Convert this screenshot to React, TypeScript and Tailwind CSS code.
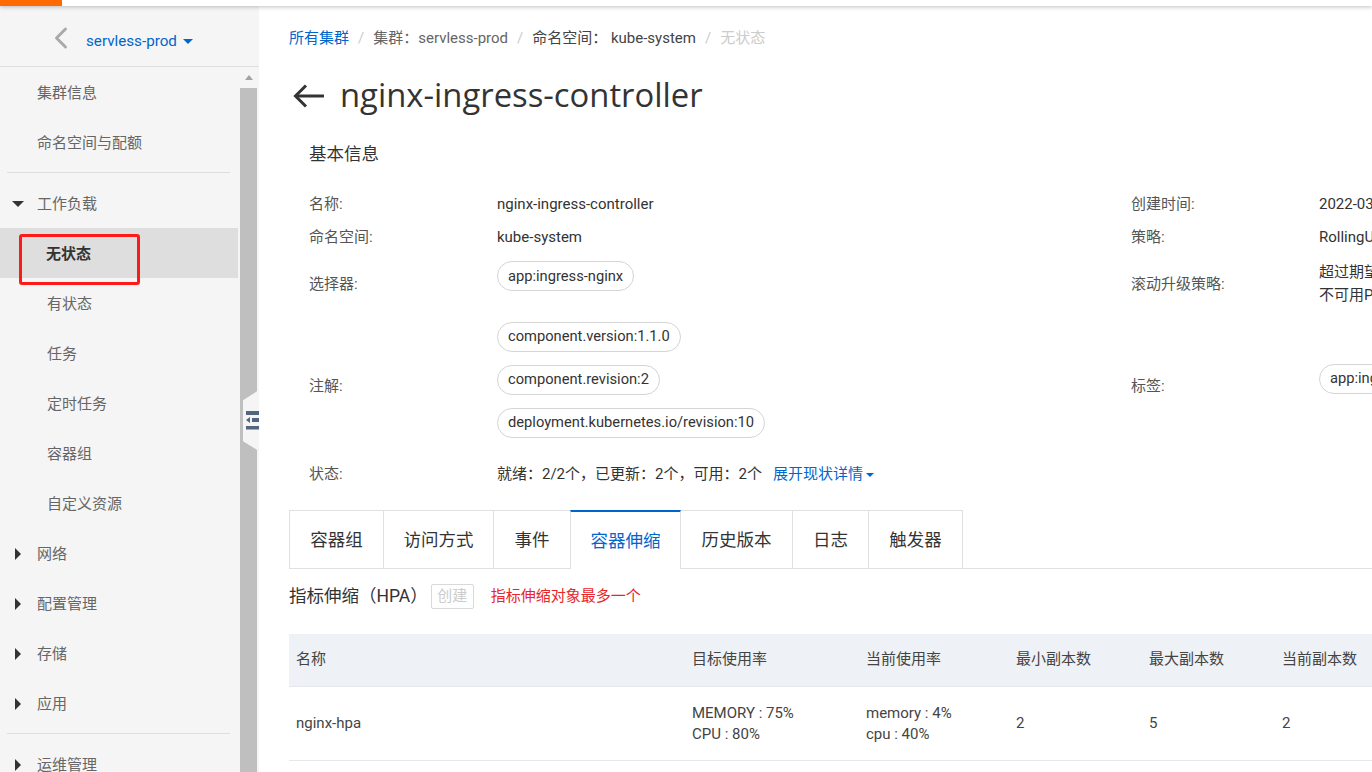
import { ChevronLeft } from 'lucide-react'

const FONT = "font-['Roboto','Noto_Sans_CJK_SC',sans-serif]"

function Caret({ dir }: { dir: 'down' | 'right' }) {
  if (dir === 'down') {
    return <span className="w-0 h-0 border-x-[6px] border-x-transparent border-t-[6px] border-t-[#333]" />
  }
  return <span className="w-0 h-0 border-y-[6px] border-y-transparent border-l-[6px] border-l-[#333]" />
}

function NavItem({ label }: { label: string }) {
  return <div className="h-[50px] flex items-center pl-[37px] pt-[2px] text-[15px] text-[#666]">{label}</div>
}

function NavGroup({ label, open }: { label: string; open?: boolean }) {
  return (
    <div className="h-[50px] flex items-center pt-[2px] text-[15px] text-[#666]">
      <span className={open ? 'w-[37px] pl-3 flex' : 'w-[37px] pl-[15px] flex'}>
        <Caret dir={open ? 'down' : 'right'} />
      </span>
      {label}
    </div>
  )
}

function SubItem({ label, active }: { label: string; active?: boolean }) {
  return (
    <div className={`h-[50px] flex items-center pt-[2px] text-[15px] ${active ? 'pl-[46px] bg-[#dedede] font-bold text-[#333]' : 'pl-[47px] text-[#666]'}`}>
      {label}
    </div>
  )
}

function Sidebar() {
  return (
    <aside className="w-[259px] shrink-0 bg-[#f5f5f5] flex flex-col h-full">
      <div className="h-[61px] shrink-0 flex items-center border-b border-[#dedede] pl-[43px]">
        <ChevronLeft size={36} strokeWidth={2} className="text-[#aaa] mt-[3px]" />
        <span className="ml-[7px] mt-[11px] text-[15.2px] text-[#0066cc]">servless-prod</span>
        <span className="ml-[6px] mt-[11px] w-0 h-0 border-x-[5px] border-x-transparent border-t-[5px] border-t-[#0066cc]" />
      </div>
      <div className="flex flex-1 min-h-0 overflow-hidden">
        <nav className="w-[238px] shrink-0">
          <NavItem label="集群信息" />
          <NavItem label="命名空间与配额" />
          <div className="h-px bg-[#dedede] ml-[7px] mr-[8px] mt-[5px] mb-[5px]" />
          <NavGroup label="工作负载" open />
          <SubItem label="无状态" active />
          <SubItem label="有状态" />
          <SubItem label="任务" />
          <SubItem label="定时任务" />
          <SubItem label="容器组" />
          <SubItem label="自定义资源" />
          <NavGroup label="网络" />
          <NavGroup label="配置管理" />
          <NavGroup label="存储" />
          <NavGroup label="应用" />
          <div className="h-px bg-[#dedede] ml-[7px] mr-[8px] mt-[5px] mb-[5px]" />
          <NavGroup label="运维管理" />
        </nav>
        <div className="w-[17px] ml-[2px] flex flex-col">
          <div className="h-[21px] flex items-center justify-center bg-[#f5f5f5]">
            <span className="w-0 h-0 border-x-[4px] border-x-transparent border-b-[5px] border-b-[#a3a3a3]" />
          </div>
          <div className="flex-1 bg-[#bfbfbf]" />
        </div>
      </div>
    </aside>
  )
}

function Tag({ children }: { children: string }) {
  return (
    <span className="inline-flex items-center h-[30px] px-[10px] rounded-[15px] border border-[#d4d4d4] text-[14.7px] text-[#333] whitespace-nowrap">
      {children}
    </span>
  )
}

function InfoRow({ label, value, label2, value2, className }: {
  label: string
  value: React.ReactNode
  label2?: string
  value2?: React.ReactNode
  className: string
}) {
  return (
    <div className={`flex items-center text-[15px] text-[#333] whitespace-nowrap ${className}`}>
      <div className="w-[188px] shrink-0 text-[#555]">{label}</div>
      <div className="w-[634px] shrink-0">{value}</div>
      <div className="w-[188px] shrink-0 text-[#555]">{label2}</div>
      <div>{value2}</div>
    </div>
  )
}

const TABS = ['容器组', '访问方式', '事件', '容器伸缩', '历史版本', '日志', '触发器']
const TAB_WIDTHS = ['w-[95px]', 'w-[111px]', 'w-[78px]', 'w-[111px]', 'w-[113px]', 'w-[77px]', 'w-[95px]']
const COLS = ['w-[396px]', 'w-[174px]', 'w-[150px]', 'w-[133px]', 'w-[133px]', 'w-[100px]']

function Main() {
  return (
    <main className="flex-1 min-w-0 pl-[30px] overflow-hidden">
      <div className="h-[64px] flex items-center text-[15px] whitespace-nowrap">
        <span className="text-[#0066cc]">所有集群</span>
        <span className="mx-[9px] text-[#ccc]">/</span>
        <span className="text-[#666]">集群：servless-prod</span>
        <span className="mx-[9px] text-[#ccc]">/</span>
        <span className="text-[#444]">命名空间：&nbsp;kube-system</span>
        <span className="mx-[9px] text-[#ccc]">/</span>
        <span className="text-[#ccc]">无状态</span>
      </div>
      <div className="flex items-center h-[50px] ml-[4px]">
        <svg width="32" height="26" viewBox="0 0 32 26" fill="none" stroke="#333" strokeWidth="3" className="mt-[2px]">
          <path d="M31 13H4" />
          <path d="M13 2.5L2.5 13L13 23.5" />
        </svg>
        <h1 className="ml-[15px] font-['Open_Sans','Noto_Sans_CJK_SC',sans-serif] text-[32.8px] text-[#333] whitespace-nowrap">nginx-ingress-controller</h1>
      </div>
      <div className="pl-[20px]">
        <h2 className="mt-[22px] h-[24px] flex items-center text-[17.5px] text-[#333]">基本信息</h2>
        <InfoRow className="h-[33px] mt-[22px]" label="名称:" value="nginx-ingress-controller" label2="创建时间:" value2="2022-03-08 10:20:11" />
        <InfoRow className="h-[33px]" label="命名空间:" value="kube-system" label2="策略:" value2="RollingUpdate" />
        <InfoRow
          className="h-[60px]"
          label="选择器:"
          value={<div className="mb-[16px]"><Tag>app:ingress-nginx</Tag></div>}
          label2="滚动升级策略:"
          value2={<div className="leading-[23px]">超过期望的Pod数量：25%<br />不可用Pod最大数量：25%</div>}
        />
        <InfoRow
          className="h-[145px]"
          label="注解:"
          value={
            <div className="flex flex-col items-start gap-[13px] mb-[14px]">
              <Tag>component.version:1.1.0</Tag>
              <Tag>component.revision:2</Tag>
              <Tag>deployment.kubernetes.io/revision:10</Tag>
            </div>
          }
          label2="标签:"
          value2={<div className="mb-[16px]"><Tag>app:ingress-nginx</Tag></div>}
        />
        <InfoRow
          className="h-[31px]"
          label="状态:"
          value={
            <span className="flex items-center">
              就绪：2/2个，已更新：2个，可用：2个
              <span className="ml-[11px] text-[#0066cc]">展开现状详情</span>
              <span className="ml-[3px] w-0 h-0 border-x-[4px] border-x-transparent border-t-[4px] border-t-[#0066cc]" />
            </span>
          }
        />
      </div>

      <div className="mt-[20px] flex border-b border-[#e0e0e0] h-[59px] text-[17.5px] text-[#333]">
        {TABS.map((tab, i) => (
          <div
            key={tab}
            className={`${TAB_WIDTHS[i]} -ml-px first:ml-0 flex items-center justify-center pt-[2px] border-x ${
              i === 3
                ? 'relative z-10 h-[59px] border-t-2 border-t-[#0066cc] border-x-[#e0e0e0] bg-white text-[#0066cc]'
                : 'border-t border-[#e0e0e0]'
            }`}
          >
            {tab}
          </div>
        ))}
      </div>

      <div className="h-[55px] flex items-center whitespace-nowrap">
        <span className="text-[17.5px] text-[#333]">指标伸缩（HPA）</span>
        <span className="ml-[3px] h-[25px] w-[43px] flex items-center justify-center rounded-[2px] border border-[#d9d9d9] text-[15px] text-[#ccc]">创建</span>
        <span className="ml-[17px] text-[15px] text-[#e8262b]">指标伸缩对象最多一个</span>
      </div>

      <div className="mt-[10px] text-[15px] text-[#444] whitespace-nowrap">
        <div className="flex items-center h-[53px] pl-[7px] pb-[2px] bg-[#eef1f5] border-b border-[#e4e7ec]">
          {['名称', '目标使用率', '当前使用率', '最小副本数', '最大副本数', '当前副本数'].map((h, i) => (
            <div key={h} className={`${COLS[i]} shrink-0`}>{h}</div>
          ))}
        </div>
        <div className="flex items-center h-[74px] pl-[7px] border-b border-[#e4e7ec]">
          <div className={`${COLS[0]} shrink-0`}>nginx-hpa</div>
          <div className={`${COLS[1]} shrink-0 leading-[21px]`}>MEMORY : 75%<br />CPU : 80%</div>
          <div className={`${COLS[2]} shrink-0 leading-[21px]`}>memory : 4%<br />cpu : 40%</div>
          <div className={`${COLS[3]} shrink-0`}>2</div>
          <div className={`${COLS[4]} shrink-0`}>5</div>
          <div className={`${COLS[5]} shrink-0`}>2</div>
        </div>
      </div>
    </main>
  )
}

export default function App() {
  return (
    <div className={`${FONT} relative w-[1372px] h-[772px] overflow-hidden bg-white`}>
      <div className="relative z-10 h-[6px] bg-white shadow-[0_1px_4px_rgba(0,0,0,0.25)]">
        <div className="w-[62px] h-[6px] bg-[#ff6a00]" />
      </div>
      <div className="flex h-[766px]">
        <Sidebar />
        <Main />
      </div>

      {/* red annotation box */}
      <div className="absolute left-[19px] top-[234px] w-[121px] h-[51px] rounded-[3px] border-[3px] border-[#ff1a1a]" />

      {/* collapse handle */}
      <div className="absolute left-[243px] top-[390px] w-[16px] h-[61px] bg-[#f5f5f5] [clip-path:polygon(0_17%,100%_0,100%_100%,0_84%)]">
        <svg width="16" height="61" viewBox="0 0 16 61" className="block">
          <path d="M3 21h13v4H3zM3 36h13v3.5H3zM9 28h7v4H9z" fill="#56657f" />
          <path d="M3 30l4-3v6z" fill="#56657f" />
        </svg>
      </div>
    </div>
  )
}
